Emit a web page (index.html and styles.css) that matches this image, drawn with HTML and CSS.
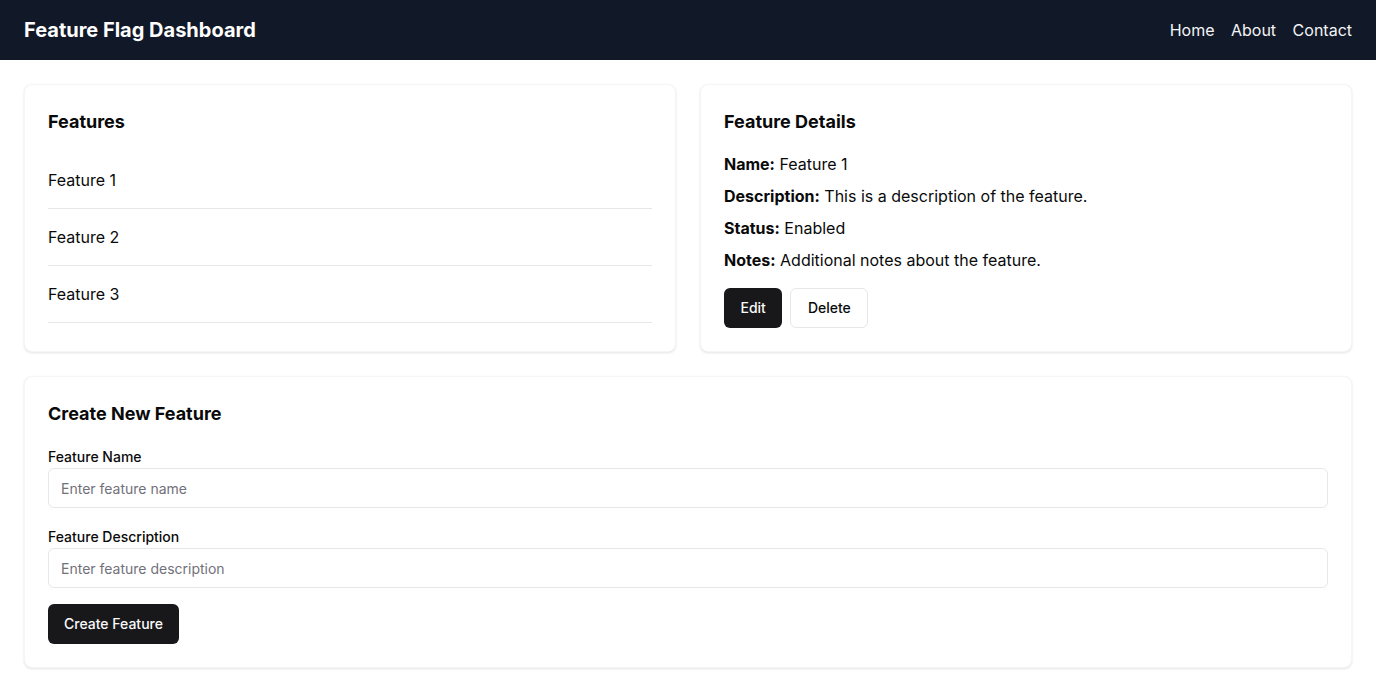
FILE: index.html
```html
<!DOCTYPE html>
<html lang="en">
<head>
<meta charset="utf-8">
<title>Feature Flag Dashboard</title>
<link rel="stylesheet" href="styles.css">
</head>
<body>
<header class="topbar">
  <h1 class="brand">Feature Flag Dashboard</h1>
  <nav class="nav">
    <a href="#">Home</a>
    <a href="#">About</a>
    <a href="#">Contact</a>
  </nav>
</header>
<main class="main">
  <div class="grid">
    <section class="card">
      <h2 class="card-title">Features</h2>
      <ul class="feature-list">
        <li>Feature 1</li>
        <li>Feature 2</li>
        <li>Feature 3</li>
      </ul>
    </section>
    <section class="card">
      <h2 class="card-title">Feature Details</h2>
      <p class="detail"><strong>Name:</strong> Feature 1</p>
      <p class="detail"><strong>Description:</strong> This is a description of the feature.</p>
      <p class="detail"><strong>Status:</strong> Enabled</p>
      <p class="detail"><strong>Notes:</strong> Additional notes about the feature.</p>
      <div class="actions">
        <button class="btn btn-dark">Edit</button>
        <button class="btn btn-light">Delete</button>
      </div>
    </section>
  </div>
  <section class="card card-form">
    <h2 class="card-title form-title">Create New Feature</h2>
    <div class="field">
      <label class="label">Feature Name</label>
      <input class="input" type="text" placeholder="Enter feature name">
    </div>
    <div class="field">
      <label class="label">Feature Description</label>
      <input class="input" type="text" placeholder="Enter feature description">
    </div>
    <button class="btn btn-dark btn-create">Create Feature</button>
  </section>
</main>
</body>
</html>
```
FILE: styles.css
```css
* { box-sizing: border-box; }
html, body { margin: 0; padding: 0; }
body {
  font-family: Inter, "Noto Sans", sans-serif;
  color: #0a0a0a;
  background: #ffffff;
}
.topbar {
  height: 60px;
  background: #111827;
  display: flex;
  align-items: center;
  justify-content: space-between;
  padding: 0 24px;
}
.brand {
  margin: 0;
  font-size: 20px;
  font-weight: 700;
  line-height: 28px;
  color: #ffffff;
}
.nav {
  display: flex;
  gap: 16.5px;
}
.nav a {
  color: #f3f4f6;
  text-decoration: none;
  font-size: 16px;
  line-height: 24px;
}
.main {
  padding: 24px;
}
.grid {
  display: grid;
  grid-template-columns: 1fr 1fr;
  gap: 24px;
  margin-bottom: 24px;
}
.card {
  background: #ffffff;
  border: 1px solid #f5f5f5;
  border-radius: 8px;
  box-shadow: 0 1px 3px rgba(0,0,0,0.08), 0 1px 2px rgba(0,0,0,0.04);
  padding: 23px;
}
.card-title {
  margin: 0 0 16px;
  font-size: 18px;
  line-height: 28px;
  font-weight: 700;
  color: #0a0a0a;
}
.feature-list {
  list-style: none;
  margin: 0;
  padding: 0;
}
.feature-list li {
  padding: 16px 0;
  font-size: 16px;
  line-height: 24px;
  border-bottom: 1px solid #e5e7eb;
}
.detail {
  margin: 0 0 8px;
  font-size: 16px;
  line-height: 24px;
}
.detail strong { font-weight: 700; }
.actions {
  display: flex;
  gap: 8px;
  margin-top: 16px;
}
.btn {
  height: 40px;
  padding: 0 16.5px 1px;
  border-radius: 6px;
  font-family: inherit;
  font-size: 14px;
  font-weight: 500;
  cursor: pointer;
}
.btn-dark {
  background: #18181b;
  color: #fafafa;
  border: none;
}
.btn-light {
  background: #ffffff;
  color: #0a0a0a;
  border: 1px solid #e5e7eb;
}
.btn-create { padding: 0 16px 1px; }
.form-title { margin-bottom: 19px; }
.field {
  margin-bottom: 19px;
}
.field:last-of-type { margin-bottom: 16px; }
.label {
  display: block;
  font-size: 14px;
  line-height: 20px;
  font-weight: 500;
  margin-bottom: 1px;
}
.input {
  display: block;
  width: 100%;
  height: 40px;
  padding: 0 12px;
  border: 1px solid #e5e7eb;
  border-radius: 6px;
  font-family: inherit;
  font-size: 14px;
  color: #0a0a0a;
  background: #ffffff;
}
.input::placeholder { color: #71717a; }
```
